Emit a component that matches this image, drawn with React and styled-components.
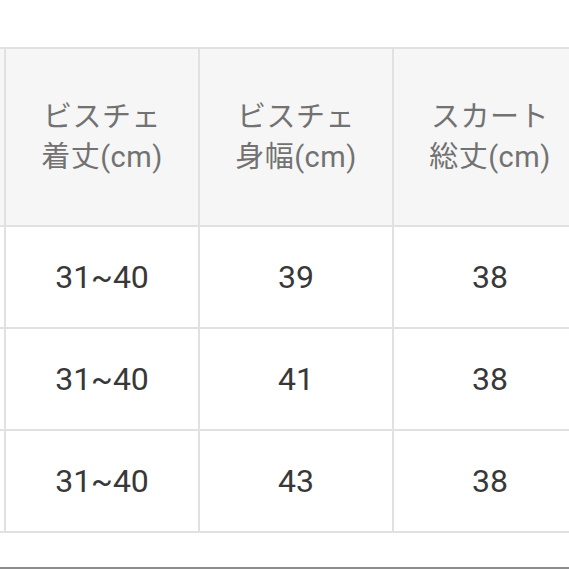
import React from "react";
import styled, { createGlobalStyle } from "styled-components";

const GlobalStyle = createGlobalStyle`
  html, body {
    margin: 0;
    padding: 0;
    background: #fff;
  }
  body {
    font-family: Roboto, "Noto Sans CJK JP", sans-serif;
  }
`;

const Page = styled.div`
  width: 569px;
  height: 569px;
  overflow: hidden;
  padding-top: 47px;
  box-sizing: border-box;
`;

const Scroller = styled.div`
  overflow: hidden;
  width: 569px;
`;

const Table = styled.div`
  display: grid;
  grid-template-columns: repeat(4, 192px);
  grid-template-rows: 176px repeat(3, 100px);
  gap: 2px;
  padding: 2px;
  width: max-content;
  margin-left: -190px;
  background: #e1e1e1;
`;

const HeadCell = styled.div`
  display: flex;
  align-items: center;
  justify-content: center;
  text-align: center;
  background: #f6f6f6;
  color: #727272;
  font-size: 29px;
  line-height: 40px;
  letter-spacing: 0.5px;
`;

const Cell = styled.div`
  display: flex;
  align-items: center;
  justify-content: center;
  background: #fff;
  color: #383838;
  font-size: 32px;
`;

const Divider = styled.div`
  margin-top: 34px;
  height: 2px;
  background: #8c8c8c;
`;

// first column is scrolled out of view, so its labels are left blank
const headers = [
  ["", ""],
  ["ビスチェ", "着丈(cm)"],
  ["ビスチェ", "身幅(cm)"],
  ["スカート", "総丈(cm)"],
];

const rows = [
  ["", "31~40", "39", "38"],
  ["", "31~40", "41", "38"],
  ["", "31~40", "43", "38"],
];

export default function App() {
  return (
    <Page>
      <GlobalStyle />
      <Scroller>
        <Table>
          {headers.map(([a, b], i) => (
            <HeadCell key={i}>
              <span>
                {a}
                {b && <br />}
                {b}
              </span>
            </HeadCell>
          ))}
          {rows.map((row, r) =>
            row.map((v, c) => <Cell key={`${r}-${c}`}>{v}</Cell>)
          )}
        </Table>
      </Scroller>
      <Divider />
    </Page>
  );
}
